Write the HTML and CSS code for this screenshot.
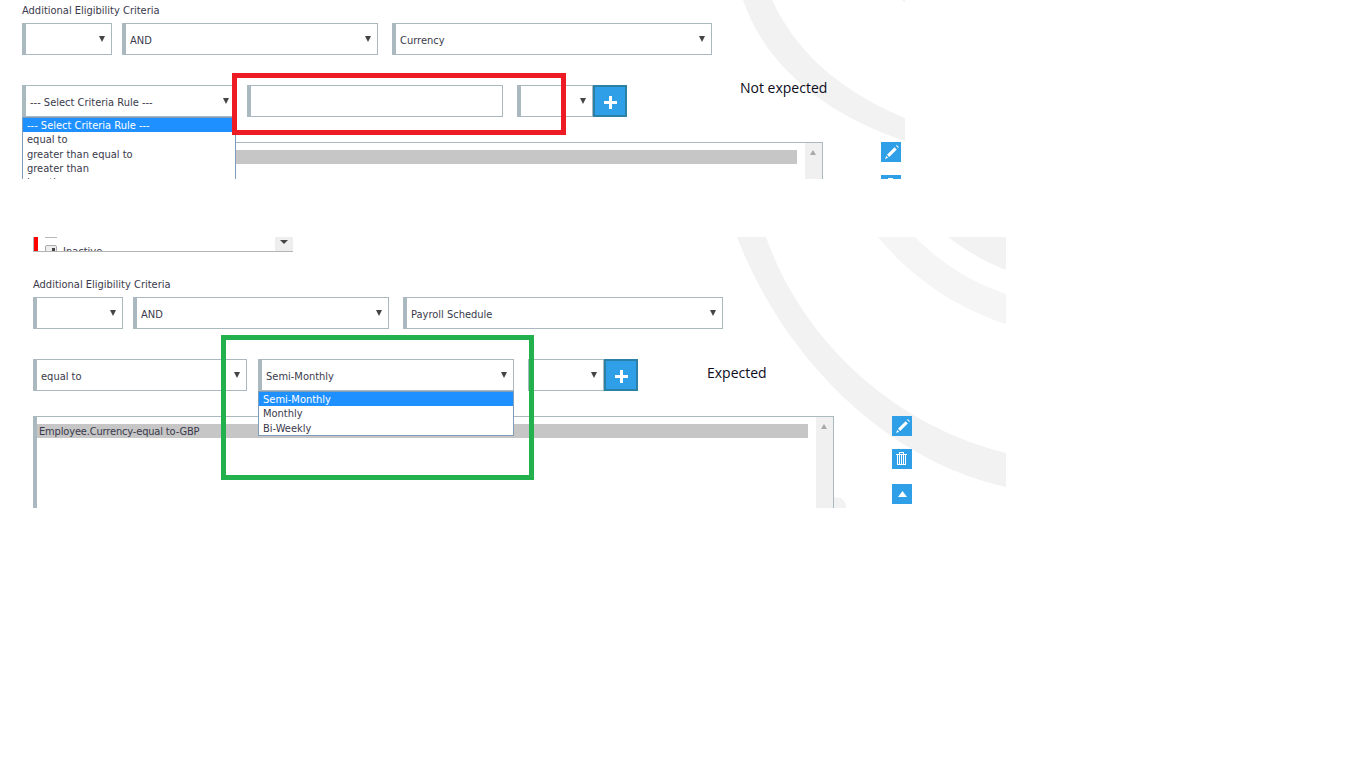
FILE: index.html
```html
<!DOCTYPE html>
<html lang="en">
<head>
<meta charset="utf-8">
<title>Additional Eligibility Criteria</title>
<link rel="stylesheet" href="styles.css">
</head>
<body>
<section class="shot shot-a">
  <svg class="arcs" width="905" height="179" viewBox="0 0 905 179" aria-hidden="true">
    <path class="arc" d="M743 0C765 65 825 115 905 141V118C850 95 800 60 772 0Z"/>
    <path class="arc" d="M902 0L905 3V0Z"/>
  </svg>
  <p class="title">Additional Eligibility Criteria</p>
  <div class="row row-top">
    <div class="sel w-s"></div>
    <div class="sel w-m">AND</div>
    <div class="sel w-l">Currency</div>
  </div>
  <div class="row row-mid">
    <div class="sel w-rule">--- Select Criteria Rule ---
      <ul class="drop">
        <li class="on">--- Select Criteria Rule ---</li>
        <li>equal to</li>
        <li>greater than equal to</li>
        <li>greater than</li>
        <li>less than</li>
      </ul>
    </div>
    <div class="inp w-m"></div>
    <div class="sel w-x"></div>
    <button class="add" type="button"><svg width="13" height="13" viewBox="0 0 13 13"><path d="M5 0h3v5h5v3H8v5H5V8H0V5h5z"/></svg></button>
    <span class="note note-a">Not expected</span>
  </div>
  <div class="row row-list">
    <div class="list">
      <div class="list-body"><div class="entry"></div></div>
      <div class="scroll"></div>
    </div>
    <div class="tools">
      <span class="tool tool-edit"><svg width="20" height="20" viewBox="0 0 20 20"><path d="M13.600 5.200l2.200 2.200-7.600 7.600-2.200-2.200zM15 3.800l.7-.7 2.200 2.200-.7.7zM5.200 13.900l1.900 1.900-3 1.100z"/></svg></span>
      <span class="tool tool-trash"><svg width="20" height="20" viewBox="0 0 20 20"><path d="M7 3h5v2h3v1H4V5h3zM8 4v1h3V4z" fill-rule="evenodd"/><path d="M5 6h1v9H5zM7 6h1v9H7zM9 6h1v9H9zM11 6h1v9h-1zM13 6h1v9h-1zM5 15h9v1H5z"/></svg></span>
    </div>
  </div>
  <div class="mark mark-red"></div>
</section>

<section class="shot shot-b">
  <svg class="arcs" width="1006" height="271" viewBox="0 0 1006 271" aria-hidden="true">
    <path class="arc" d="M737 0C785 125 890 225 1006 250V216C900 190 805 110 766 0Z"/>
    <path class="arc soft" d="M878 0C915 45 960 72 1006 87V57C970 45 940 25 915 0Z"/>
    <path class="arc" d="M948 0C965 13 985 25 1006 33V0Z"/>
    <path class="arc" d="M834 260Q846 260 846 271H834Z"/>
  </svg>
  <div class="strip">
    <i class="flag"></i>
    <div class="strip-items">
      <i class="line"></i>
      <div class="strip-item"><i class="box"></i><span>Inactive</span></div>
    </div>
    <i class="strip-btn"></i>
  </div>
  <p class="title title-b">Additional Eligibility Criteria</p>
  <div class="row row-top">
    <div class="sel w-s"></div>
    <div class="sel w-m">AND</div>
    <div class="sel w-l">Payroll Schedule</div>
  </div>
  <div class="row row-mid">
    <div class="sel w-rule">equal to</div>
    <div class="sel w-m">Semi-Monthly
      <ul class="drop">
        <li class="on">Semi-Monthly</li>
        <li>Monthly</li>
        <li>Bi-Weekly</li>
      </ul>
    </div>
    <div class="sel w-x"></div>
    <button class="add" type="button"><svg width="13" height="13" viewBox="0 0 13 13"><path d="M5 0h3v5h5v3H8v5H5V8H0V5h5z"/></svg></button>
    <span class="note note-b">Expected</span>
  </div>
  <div class="row row-list">
    <div class="list">
      <div class="list-body"><div class="entry">Employee.Currency-equal to-GBP</div></div>
      <div class="scroll"></div>
    </div>
    <div class="tools">
      <span class="tool tool-edit"><svg width="20" height="20" viewBox="0 0 20 20"><path d="M13.600 5.200l2.200 2.200-7.600 7.600-2.200-2.200zM15 3.800l.7-.7 2.200 2.200-.7.7zM5.200 13.900l1.900 1.900-3 1.100z"/></svg></span>
      <span class="tool tool-trash"><svg width="20" height="20" viewBox="0 0 20 20"><path d="M7 3h5v2h3v1H4V5h3zM8 4v1h3V4z" fill-rule="evenodd"/><path d="M5 6h1v9H5zM7 6h1v9H7zM9 6h1v9H9zM11 6h1v9h-1zM13 6h1v9h-1zM5 15h9v1H5z"/></svg></span>
      <span class="tool tool-up"><svg width="20" height="20" viewBox="0 0 20 20"><path d="M10.500 7L15 13H6z"/></svg></span>
    </div>
  </div>
  <div class="mark mark-green"></div>
</section>
</body>
</html>
```
FILE: styles.css
```css
* { box-sizing: border-box; }
html, body { margin: 0; padding: 0; background: #fff; }
body { font-family: "DejaVu Sans Condensed", "Open Sans", sans-serif; font-size: 11px; color: #3a3a4c; }

.shot { position: relative; overflow: hidden; background: #fff; }
.shot-a { width: 905px; height: 179px; padding: 3px 0 0 22px; }
.shot-b { width: 1006px; height: 271px; margin-top: 58px; padding-left: 33px; }

.arcs { position: absolute; left: 0; top: 0; }
.arc { fill: #f2f2f2; }
.arc.soft { fill: #f5f5f5; }

.title { position: relative; margin: 0 0 6px; height: 14px; line-height: 16px; }
.title-b { margin-top: 25px; }

.row { position: relative; display: flex; align-items: flex-start; }
.row-top { gap: 10px; margin-bottom: 30px; }
.row-top .w-l { margin-left: 4px; }
.row-mid { margin-bottom: 25px; }

.sel, .inp {
  position: relative; height: 32px; flex: none; background: #fff;
  border: 1px solid #aab8c0; border-left-width: 4px;
  padding: 0 0 0 4px; line-height: 33px;
}
.sel::after {
  content: ""; position: absolute; right: 6px; top: 12px;
  border-style: solid; border-width: 6px 3px 0; border-color: #444 transparent transparent;
}
.w-s { width: 90px; }
.w-m { width: 256px; }
.w-l { width: 320px; }
.w-rule { width: 214px; margin-right: 11px; }
.w-x { width: 76px; margin-left: 14px; }

.drop {
  position: absolute; left: -4px; right: -1px; top: 31px; z-index: 2; margin: 0; padding: 0;
  list-style: none; background: #fff; border: 1px solid #7f9db9; line-height: 16.3px;
}
.drop li { height: 14.3px; padding-left: 4px; white-space: nowrap; }
.drop .on { background: #1e90ff; color: #fff; }

.add {
  width: 34px; height: 32px; flex: none; display: flex; align-items: center; justify-content: center;
  padding: 3px 0 0 1px; background: #2f9fe8; border: 2px solid #2b80a6;
}
.add svg { fill: #fff; display: block; }

.note { flex: none; font-family: "Open Sans", sans-serif; font-size: 14px; line-height: 20px; color: #0c0c1c; }
.note-a { margin: -7px 0 0 113px; }
.note-b { margin: 4px 0 0 69px; }

.row-list { gap: 58px; }
.list {
  display: flex; width: 801px; height: 120px; flex: none; background: transparent;
  border: 1px solid #aab8c0; border-left-width: 4px; border-bottom: 0;
}
.list-body { flex: 1; padding: 7px 8px 0 0; }
.entry { height: 14px; line-height: 16px; padding-left: 2px; letter-spacing: -0.16px; background: #c6c6c6; }
.scroll { position: relative; width: 17px; background: #f0f0f0; }
.scroll::before {
  content: ""; position: absolute; left: 5px; top: 7px;
  border-style: solid; border-width: 0 3.500px 5px; border-color: transparent transparent #a8a8a8;
}

.tools { display: flex; flex-direction: column; }
.tool { display: block; width: 20px; height: 20px; background: #2f9fe8; }
.tool svg { display: block; fill: #fff; }
.tool-trash { margin-top: 13px; }
.tool-up { margin-top: 15px; }

.strip {
  position: relative; display: flex; width: 260px; height: 15px;
  border-left: 1px solid #b4b4b4; border-bottom: 1px solid #b4b4b4; overflow: hidden;
}
.flag { width: 4px; height: 14px; background: #f00; flex: none; }
.strip-items { flex: 1; padding-left: 7px; }
.line { display: block; width: 12px; height: 1px; background: #b8b8b8; }
.strip-item { display: flex; gap: 6px; margin-top: 7px; line-height: 14px; }
.box { position: relative; display: block; flex: none; width: 12px; height: 12px; border: 1px solid #aaa; border-radius: 2px; background: #eee; }
.box::after { content: ""; position: absolute; left: 6px; top: 2px; width: 3px; height: 3px; background: #444; }
.strip-btn { position: relative; width: 18px; background: #eee; flex: none; }
.strip-btn::after {
  content: ""; position: absolute; left: 5px; top: 3px;
  border-style: solid; border-width: 4px 4px 0; border-color: #444 transparent transparent;
}

.mark { position: absolute; z-index: 3; border-style: solid; border-width: 5px; }
.mark-red { left: 232px; top: 73px; width: 334px; height: 62px; border-color: #ed1c24; }
.mark-green { left: 221px; top: 98px; width: 313px; height: 145px; border-color: #22b14c; }
```
